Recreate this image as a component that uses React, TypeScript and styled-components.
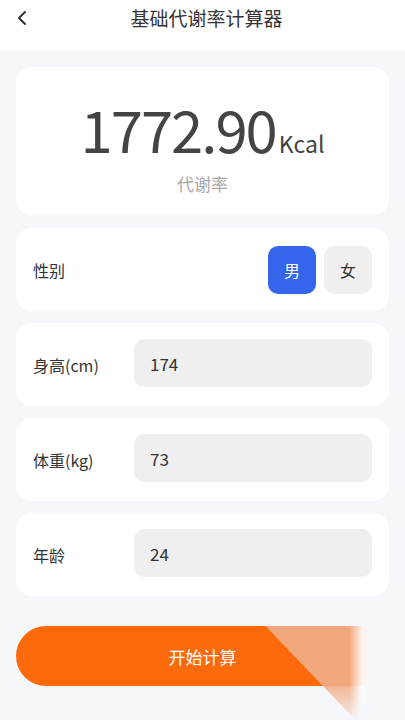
import React from "react";
import styled, { createGlobalStyle } from "styled-components";

const GlobalStyle = createGlobalStyle`
  html, body {
    margin: 0;
    padding: 0;
    background: #f6f7fb;
    font-family: "Noto Sans CJK SC", "Noto Sans", sans-serif;
  }
  * { box-sizing: border-box; }
`;

const Page = styled.div`
  width: 405px;
  height: 720px;
  overflow: hidden;
  background: #f6f7fb;
  display: flex;
  flex-direction: column;
`;

const Header = styled.header`
  height: 50px;
  background: #ffffff;
  position: relative;
  display: flex;
  align-items: flex-start;
  justify-content: center;
  padding: 4px 0 0 8px;
`;

const BackButton = styled.button`
  position: absolute;
  left: 10px;
  top: 6px;
  width: 24px;
  height: 24px;
  padding: 0;
  border: none;
  background: none;
  display: flex;
  align-items: center;
  justify-content: center;
`;

const Title = styled.h1`
  margin: 0;
  font-size: 19px;
  font-weight: 400;
  color: #333;
  line-height: 28px;
`;

const Content = styled.main`
  display: flex;
  flex-direction: column;
  gap: 12px;
  padding: 17px 16px 0;
`;

const ResultCard = styled.section`
  height: 148px;
  background: #fff;
  border-radius: 16px;
  display: flex;
  flex-direction: column;
  align-items: center;
  padding-top: 32px;
  margin-bottom: 1px;
`;

const ValueLine = styled.div`
  display: flex;
  align-items: baseline;
  color: #444;
  line-height: 1;
`;

const Value = styled.span`
  font-size: 58px;
  font-weight: 400;
  letter-spacing: -2px;
`;

const Unit = styled.span`
  font-size: 23px;
  margin-left: 3px;
`;

const ValueCaption = styled.div`
  margin-top: 14px;
  font-size: 17px;
  color: #a8a8a8;
`;

const FieldCard = styled.section`
  height: 83px;
  background: #fff;
  border-radius: 16px;
  display: flex;
  align-items: center;
  padding: 0 17px;
`;

const Label = styled.span`
  width: 101px;
  flex-shrink: 0;
  font-size: 16px;
  color: #333;
`;

const Spacer = styled.div`
  flex: 1;
`;

const GenderGroup = styled.div`
  display: flex;
  gap: 8px;
`;

const GenderButton = styled.button<{ $active?: boolean }>`
  width: 48px;
  height: 48px;
  border: none;
  border-radius: 10px;
  font-family: inherit;
  font-size: 16px;
  background: ${(p) => (p.$active ? "#3565ea" : "#efefef")};
  color: ${(p) => (p.$active ? "#fff" : "#333")};
  padding: 0;
`;

const Input = styled.input`
  flex: 1;
  min-width: 0;
  height: 48px;
  margin-top: -3px;
  border: none;
  border-radius: 10px;
  background: #efefef;
  padding: 0 16px;
  font-family: inherit;
  font-size: 17px;
  color: #333;
  outline: none;
`;

const Footer = styled.div`
  padding: 30px 16px 0;
  position: relative;
`;

const StartButton = styled.button`
  width: 100%;
  height: 60px;
  border: none;
  border-radius: 30px;
  background: #fd6a0b;
  color: #fff;
  font-family: inherit;
  font-size: 17px;
  padding: 0;
`;

const Shine = styled.div`
  position: absolute;
  left: 250px;
  top: 30px;
  width: 155px;
  height: 94px;
  pointer-events: none;
  clip-path: polygon(10% 0, 100% 0, 100% 100%, 68% 100%);
  background: linear-gradient(
    to right,
    rgba(242, 168, 124, 1) 0%,
    rgba(242, 168, 124, 1) 64%,
    rgba(255, 255, 255, 0.9) 72%,
    rgba(246, 247, 251, 1) 80%
  );
`;

const ShineFade = styled.div`
  position: absolute;
  left: 250px;
  top: 90px;
  width: 155px;
  height: 34px;
  pointer-events: none;
  background: linear-gradient(to bottom, rgba(246, 247, 251, 0.2), rgba(246, 247, 251, 0.85));
`;

const EdgeFade = styled.div`
  position: absolute;
  left: 360px;
  top: 30px;
  width: 45px;
  height: 94px;
  pointer-events: none;
  background: linear-gradient(to right, rgba(246, 247, 251, 0), #f6f7fb 40%);
`;

export default function App() {
  return (
    <Page>
      <GlobalStyle />
      <Header>
        <BackButton aria-label="返回">
          <svg width="14" height="16" viewBox="0 0 14 16" fill="none">
            <polyline points="10,2 4,8 10,14" stroke="#333" strokeWidth="2" strokeLinecap="round" strokeLinejoin="round" />
          </svg>
        </BackButton>
        <Title>基础代谢率计算器</Title>
      </Header>
      <Content>
        <ResultCard>
          <ValueLine>
            <Value>1772.90</Value>
            <Unit>Kcal</Unit>
          </ValueLine>
          <ValueCaption>代谢率</ValueCaption>
        </ResultCard>
        <FieldCard>
          <Label>性别</Label>
          <Spacer />
          <GenderGroup>
            <GenderButton $active>男</GenderButton>
            <GenderButton>女</GenderButton>
          </GenderGroup>
        </FieldCard>
        <FieldCard>
          <Label>身高(cm)</Label>
          <Input defaultValue="174" />
        </FieldCard>
        <FieldCard>
          <Label>体重(kg)</Label>
          <Input defaultValue="73" />
        </FieldCard>
        <FieldCard>
          <Label>年龄</Label>
          <Input defaultValue="24" />
        </FieldCard>
      </Content>
      <Footer>
        <StartButton>开始计算</StartButton>
        <Shine />
        <ShineFade />
        <EdgeFade />
      </Footer>
    </Page>
  );
}
